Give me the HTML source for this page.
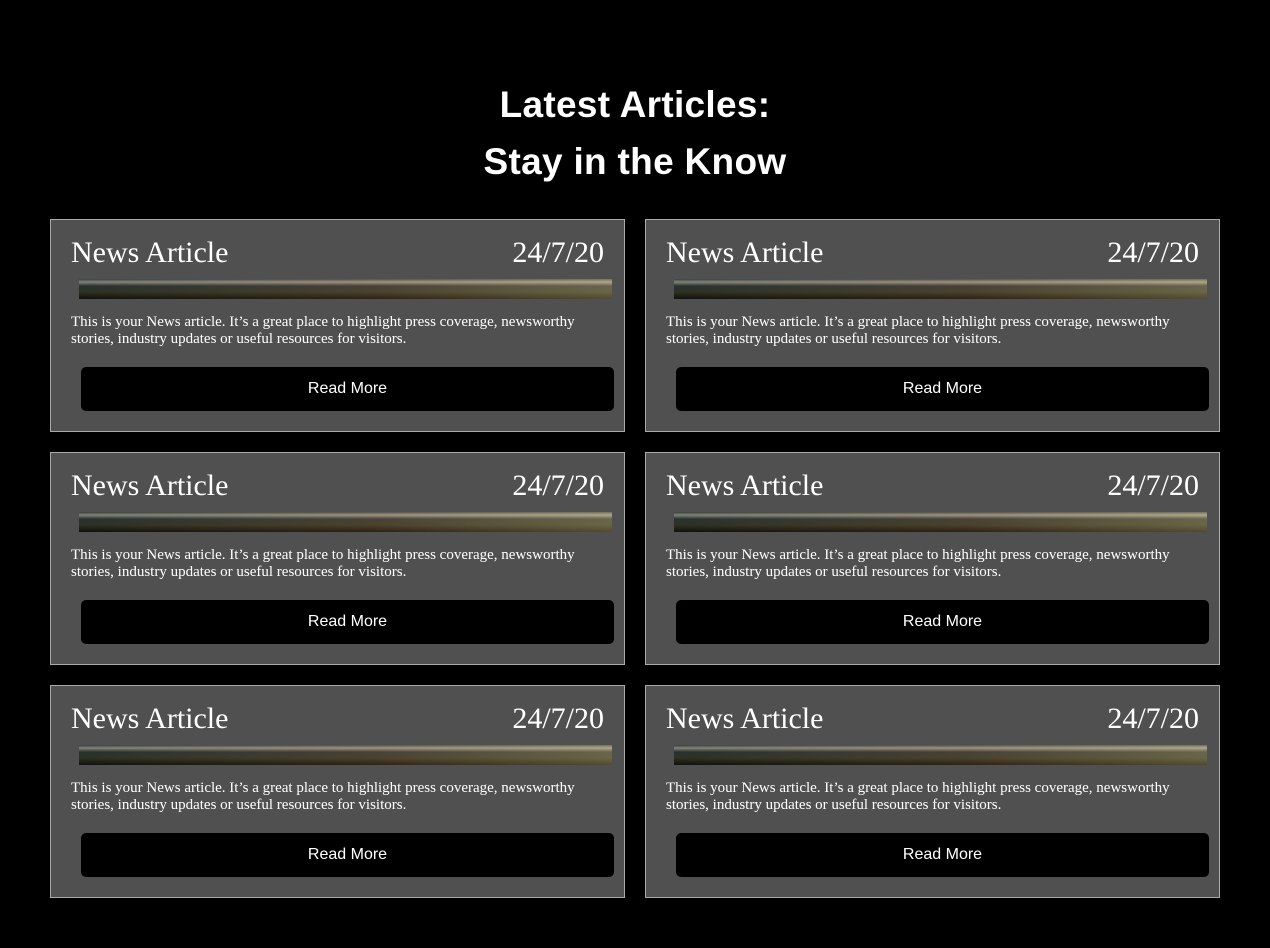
<!DOCTYPE html>
<html><head><style>
body{margin:0;width:1270px;height:948px;background:#000;font-family:"Liberation Sans",sans-serif;position:relative;overflow:hidden}
h1{position:absolute;top:76px;left:0;width:1270px;margin:0;text-align:center;color:#fff;font-size:37px;font-weight:bold;line-height:57px;letter-spacing:0.3px}
.c{position:absolute;width:573px;height:211px;background:#505050;border:1px solid #aaa}
.t,.d{position:absolute;top:15px;font-family:"Liberation Serif",serif;font-size:30px;color:#fff;line-height:36px}
.t{left:20px}.d{right:20px}
.img{position:absolute;left:28px;top:59px;width:533px;height:20px;background:linear-gradient(180deg,#3a4a50 0%,#9a9a88 15%,#2e3a3a 35%,#343a28 65%,#12140e 100%)}
.img:after{content:"";position:absolute;left:0;top:0;right:0;bottom:0;background:linear-gradient(90deg,rgba(0,0,0,.15),rgba(200,110,60,.15) 55%,rgba(230,200,130,.3))}
.p{position:absolute;left:20px;top:94px;width:545px;font-family:"Liberation Serif",serif;font-size:15px;line-height:17px;color:#fff}
.b{position:absolute;left:30px;top:147px;width:533px;height:44px;background:#000;border-radius:5px;color:#fff;font-size:16px;line-height:44px;text-align:center}
</style></head><body>
<h1>Latest Articles:<br>Stay in the Know</h1>
<div class="c" style="left:50px;top:219px"><div class="t">News Article</div><div class="d">24/7/20</div><div class="img"></div><div class="p">This is your News article. It’s a great place to highlight press coverage, newsworthy stories, industry updates or useful resources for visitors.</div><div class="b">Read More</div></div>
<div class="c" style="left:645px;top:219px"><div class="t">News Article</div><div class="d">24/7/20</div><div class="img"></div><div class="p">This is your News article. It’s a great place to highlight press coverage, newsworthy stories, industry updates or useful resources for visitors.</div><div class="b">Read More</div></div>
<div class="c" style="left:50px;top:452px"><div class="t">News Article</div><div class="d">24/7/20</div><div class="img"></div><div class="p">This is your News article. It’s a great place to highlight press coverage, newsworthy stories, industry updates or useful resources for visitors.</div><div class="b">Read More</div></div>
<div class="c" style="left:645px;top:452px"><div class="t">News Article</div><div class="d">24/7/20</div><div class="img"></div><div class="p">This is your News article. It’s a great place to highlight press coverage, newsworthy stories, industry updates or useful resources for visitors.</div><div class="b">Read More</div></div>
<div class="c" style="left:50px;top:685px"><div class="t">News Article</div><div class="d">24/7/20</div><div class="img"></div><div class="p">This is your News article. It’s a great place to highlight press coverage, newsworthy stories, industry updates or useful resources for visitors.</div><div class="b">Read More</div></div>
<div class="c" style="left:645px;top:685px"><div class="t">News Article</div><div class="d">24/7/20</div><div class="img"></div><div class="p">This is your News article. It’s a great place to highlight press coverage, newsworthy stories, industry updates or useful resources for visitors.</div><div class="b">Read More</div></div>
</body></html>
